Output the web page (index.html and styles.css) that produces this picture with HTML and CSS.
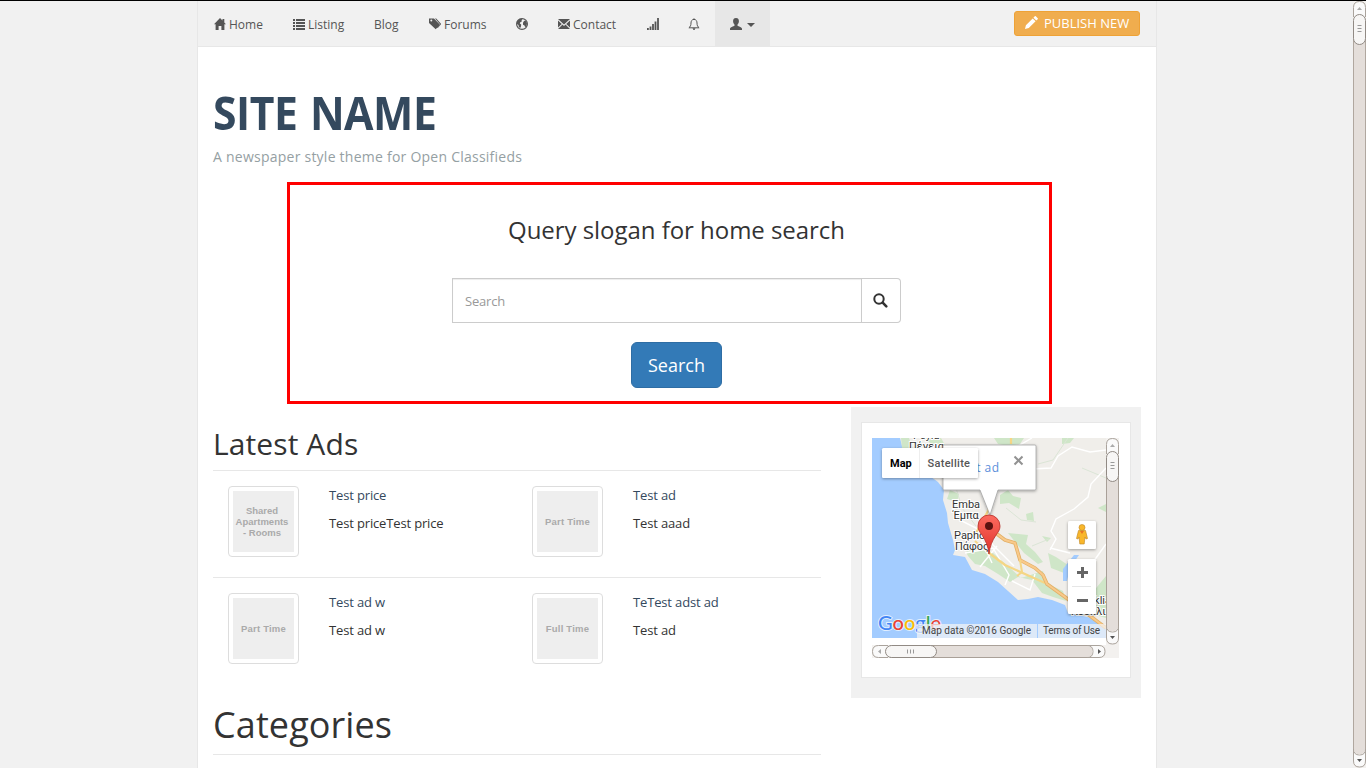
FILE: index.html
```html
<!DOCTYPE html>
<html lang="en">
<head>
<meta charset="utf-8">
<title>Site Name</title>
<link rel="stylesheet" href="styles.css">
</head>
<body>
<div class="viewport">
<div class="page">
  <nav class="nav">
    <a class="item home"><svg class="ic" viewBox="0 0 12 12"><path d="M6 0 0 6.200h1.600V12h3V8h2.800v4h3V6.200H12L10.300 4.500V1H8.500v1.600z"/></svg><span>Home</span></a>
    <a class="item listing"><svg class="ic" viewBox="0 0 12 12"><path d="M0 1h2v2H0zM3 1h9v2H3zM0 4h2v2H0zM3 4h9v2H3zM0 7h2v2H0zM3 7h9v2H3zM0 10h2v2H0zM3 10h9v2H3z"/></svg><span>Listing</span></a>
    <a class="item blog"><span>Blog</span></a>
    <a class="item forums"><svg class="ic" viewBox="0 0 12 12"><path fill-rule="evenodd" d="M0 .5h5L11 6.800 6.700 11.300 0 4.900zM2.300 1.600a1 1 0 1 0 0 2 1 1 0 0 0 0-2z"/><path d="M6 .5h1.200L12.300 6 8.800 10l-.8-.6 3.200-3z"/></svg><span>Forums</span></a>
    <a class="item globe"><svg class="ic" viewBox="0 0 12 12"><circle cx="6" cy="6" r="5.400" fill="none" stroke="#555" stroke-width="1.200"/><path d="M.8 3.500 3.500.8 6.500.8 5.500 2.200 6 3.200 4.300 4.200 3.800 5.500 5.200 6.500 5 8.500 4.200 10 2.800 9 2.500 7 1 6zM8 3l1.500-.5L11 5l-.5 3-1.300 1.200L8.500 7.500 7 6.800 7 4.800z"/></svg></a>
    <a class="item contact"><svg class="ic" viewBox="0 0 12 12"><path d="M0 1h12L6 6.500zM0 2.400 3.800 6 0 9.600zM12 2.400 8.200 6 12 9.600zM0 11l4.500-4.400L6 8l1.500-1.400L12 11z"/></svg><span>Contact</span></a>
    <a class="item signal"><svg class="ic" viewBox="0 0 12 12"><path d="M0 10h1.800v2H0zM2.600 8.500h1.800V12H2.600zM5.100 6h1.800v6H5.100zM7.600 3.500h1.800V12H7.600zM10.100 0h1.800v12h-1.800z"/></svg></a>
    <a class="item bell"><svg class="ic" viewBox="0 0 12 12"><path d="M6 .3v1M6 1.400C3.700 1.400 3 3.300 3 5c0 2.400-.7 3.700-2.100 4.800h10.200C9.700 8.700 9 7.400 9 5c0-1.700-.7-3.600-3-3.600z" fill="none" stroke="#555"/><path d="M4.500 10.200h3L6.500 12h-1z"/></svg></a>
    <a class="item user"><svg class="ic" viewBox="0 0 12 12"><path d="M6 0C3.700 0 2.900 1.600 3.100 3.600c.1 1.500.7 2.300 1.400 2.900v1.200C3.500 8.400 0 9 0 10.800V12h12v-1.200c0-1.800-3.500-2.400-4.500-3.100V6.500c.7-.6 1.300-1.400 1.400-2.900C9.100 1.600 8.300 0 6 0z"/></svg><i class="caret"></i></a>
    <a class="publish"><svg class="pencil" viewBox="0 0 13 13"><path d="M0 13 .9 9.200 7.700 2.400l2.900 2.900L3.800 12.100zM8.400 1.700 9.800.3q.5-.5 1 0l1.900 1.900q.5.500 0 1L11.300 4.600z"/></svg><span>PUBLISH NEW</span></a>
  </nav>
  <header class="brand">
    <h1>SITE NAME</h1>
    <p>A newspaper style theme for Open Classifieds</p>
  </header>
  <section class="search">
    <h2>Query slogan for home search</h2>
    <div class="group"><div class="field">Search</div><div class="addon"><svg width="15" height="15" viewBox="0 0 15 15"><circle cx="6" cy="6" r="4.700" fill="none" stroke="#333" stroke-width="2"/><path d="m9.700 9.700 3.600 3.600" stroke="#333" stroke-width="2.600" stroke-linecap="round"/></svg></div></div>
    <a class="go">Search</a>
  </section>
  <div class="columns">
    <main class="ads">
      <h2 class="latest">Latest Ads</h2>
      <div class="row">
        <article class="ad"><div class="thumb"><span class="three">Shared<br>Apartments<br>- Rooms</span></div><div class="info"><a>Test price</a><p>Test priceTest price</p></div></article>
        <article class="ad"><div class="thumb"><span>Part Time</span></div><div class="info"><a>Test ad</a><p>Test aaad</p></div></article>
      </div>
      <div class="row">
        <article class="ad"><div class="thumb"><span>Part Time</span></div><div class="info"><a>Test ad w</a><p>Test ad w</p></div></article>
        <article class="ad"><div class="thumb"><span>Full Time</span></div><div class="info"><a>TeTest adst ad</a><p>Test ad</p></div></article>
      </div>
      <h2 class="categories">Categories</h2>
    </main>
    <aside class="side"><div class="card"><div class="frame">
      <svg class="map" width="234" height="200" viewBox="0 0 234 200">
        <defs>
          <filter id="sh" x="-20%" y="-20%" width="140%" height="150%"><feDropShadow dx="0" dy="1" stdDeviation="1.500" flood-opacity=".35"/></filter>
          <linearGradient id="pin" x1="0" y1="0" x2="0" y2="1"><stop offset="0" stop-color="#fc6b60"/><stop offset="1" stop-color="#e0322b"/></linearGradient>
        </defs>
        <rect width="234" height="200" fill="#a3ccff"/>
        <path fill="#f0eeea" d="M28 0 30 8 34 16 40 22 52 34 66 44 72 52 71 62 75 75 76 85 81 102 83 112 81 117 93 119 100 132 113 136 126 144 136 153 146 162 156 161 166 159 180 162 193 167 196 175 220 180 234 189V0z"/>
        <g fill="#cfe6c8">
          <path d="M29 0h8l3 9 3 4-5 5-7-2-1-6zM51 0h18l4 7-13-1zM122 0h30l-4 6-12 2-10-2zM190 0h12l-4 5-8 1zM128 57l8-5 5 6 8 2-2 11-10-6-9 1zM154 76l7-2 1 9-7-1zM94 114l10-7 17 8 16 14 12 11 22-7 3 12 17 8 3 10-13-4-11-4-10-13-14-3-8 5-12-8-13-8-10-2-7-8zM136 95l8 10 8 10 14 11 5-2-8-10-9-8 2-9zM176 115l8 4 12 8-4 8-13-5zM211 166l23-28v42l-14-4z"/>
          <path d="M78 52l9 4-2 8-10-3zM170 98l9 2-4 4zM226 70l8-4v8z"/>
        </g>
        <path fill="#a3ccff" d="m191 131 11-14 5 0-9 13-3 13h-4z"/>
        <g fill="none" stroke="#dbe5d6"><path d="M78 30l12 40 14 18M134 70l15 12 15 2M160 108l17-7M196 0l-15 22-15 4M210 30l24 10"/></g>
        <g fill="none" stroke="#fff" stroke-width="1.400">
          <path d="M113 20 125 14 146 8 160 0M160 31l19-1 7-12 14-9 18 5 16-2M178 112l6-11-5-8 5-12 18-10 14-12 3-13 15-16M84 80l20 10 16 35M93 115l28-5 16 27-4 10M108 129l17-21M118 104l24 24M163 136l-5 16-18-9M178 110l20 5M204 148l30-42"/>
        </g>
        <g fill="none" stroke-linejoin="round">
          <path d="M139 0v6M119 60l-3 13-12 22M113 112l20 15 40 18" stroke="#f5d685" stroke-width="2.200"/>
          <path d="M121 93l12 9 10 3 5 17 15 8 8 7 4 9 18 13 41 31" stroke="#e2b067" stroke-width="3.600"/>
          <path d="M121 93l12 9 10 3 5 17 15 8 8 7 4 9 18 13 41 31" stroke="#f9c98a" stroke-width="2"/>
          <path d="M103 103l10 9M148 122l2 12-5 4" stroke="#f5d685" stroke-width="2"/>
        </g>
        <g class="place"><text x="41" y="1">Peyia</text><text x="37" y="12">Πέγεια</text><text x="80" y="70">Emba</text><text x="81" y="81">Έμπα</text><text x="82" y="101">Paphos</text><text x="83" y="112">Πάφος</text><text x="203" y="166">Kouklia</text><text x="199" y="177">Κούκλια</text></g>
        <path d="M72 7h91q1 0 1 1v43q0 1-1 1h-37l-8 25-10-25H72q-1 0-1-1V8q0-1 1-1z" fill="#fff" stroke="#999" stroke-width=".7" filter="url(#sh)"/>
        <text x="84" y="34" class="pop" textLength="43">Test ad</text>
        <path d="m142.500 18.500 8 8m0-8-8 8" stroke="#929292" stroke-width="2"/>
        <path d="M117 116c-1-8-3-13-7-19-3-4-4-6-4-9a11 11 0 0 1 22 0c0 3-1 5-4 9-4 6-6 11-7 19z" fill="url(#pin)" stroke="#b52b25" stroke-width=".8"/><circle cx="117" cy="88" r="4" fill="#5b1210"/>
        <rect x="10" y="10" width="96" height="30" rx="1.500" fill="#fff" filter="url(#sh)"/><path d="M47.500 10v30" stroke="#eee"/>
        <text x="18" y="29" class="tab on">Map</text><text x="55.500" y="29" class="tab" textLength="42.500">Satellite</text>
        <rect x="196" y="83" width="28" height="28" rx="1.500" fill="#fff" filter="url(#sh)"/>
        <g fill="#f9b72b" stroke="#be8421" stroke-width=".6"><path d="M206.500 92.500h7l2 8-1.500.5-1-2-.8 7h-4.400l-.8-7-1 2-1.500-.5z"/><circle cx="210" cy="89.500" r="3"/></g><path d="m208 93 2 3 2-3z" fill="#e77426"/>
        <rect x="196" y="121" width="28" height="55" rx="1.500" fill="#fff" filter="url(#sh)"/>
        <path d="M200 148.500h19" stroke="#e6e6e6"/><path d="M205 134.500h11M210.500 129v11M205 162.500h11" stroke="#666" stroke-width="3"/>
        <text x="6" y="192" class="logo"><tspan fill="#4285f4">G</tspan><tspan fill="#ea4335">o</tspan><tspan fill="#fbbc05">o</tspan><tspan fill="#4285f4">g</tspan><tspan fill="#34a853">l</tspan><tspan fill="#ea4335">e</tspan></text>
        <rect x="45" y="186" width="120" height="14" fill="#f5f5f5" opacity=".7"/><rect x="166" y="186" width="68" height="14" fill="#f5f5f5" opacity=".7"/>
        <text x="50" y="196" class="credit" textLength="109">Map data ©2016 Google</text><text x="171" y="196" class="credit" textLength="57">Terms of Use</text>
      </svg>
      <svg class="vbar" width="13" height="207"><rect width="13" height="207" fill="#a9a098"/><rect x="1" width="11" height="207" fill="#e4deda"/><path d="M0 0h13v20H0zM0 190h13v17H0z" fill="#f3f1ef"/><path d="M.5 16V6.500Q.5.5 6.500.5t6 6V16M.5 188q0 6 6 6t6-6v12q0 6-6 6t-6-6z" fill="#fafafa" stroke="#aaa39c"/><path d="M1 187h11q0 6.500-5.500 6.500T1 187z" fill="#e4deda"/><rect x=".5" y="13.500" width="12" height="30" rx="6" fill="#f7f6f5" stroke="#918a84"/><path d="M4.500 24.500h4m-4 3h4m-4 3h4" stroke="#999"/><path d="m4 9 2.500-3L9 9z" fill="#aaa"/><path d="m4 198 2.500 3 2.500-3z" fill="#555"/></svg>
      <svg class="hbar" width="234" height="13"><rect width="234" height="13" fill="#a9a098"/><rect y="1" width="234" height="11" fill="#e4deda"/><path d="M0 0h18v13H0zM220 0h14v13h-14z" fill="#f3f1ef"/><path d="M16 .5H6.500q-6 0-6 6t6 6H16M215 .5q6 0 6 6t-6 6h12q6 0 6-6t-6-6z" fill="#fafafa" stroke="#aaa39c"/><path d="M214 1q6.500 0 6.500 5.500T214 12z" fill="#e4deda"/><rect x="13.500" y=".5" width="51" height="12" rx="6" fill="#f7f6f5" stroke="#918a84"/><path d="M35.500 4.500v4m3-4v4m3-4v4" stroke="#999"/><path d="M9 4 6 6.500 9 9z" fill="#aaa"/><path d="m226 4 3 2.500-3 2.500z" fill="#555"/></svg>
      <i class="corner"></i>
    </div></div></aside>
  </div>
</div>
<svg class="scroll" width="13" height="767"><rect width="13" height="767" fill="#b0a79f"/><rect x="1" width="11" height="767" fill="#e4deda"/><path d="M0 0h13v20H0zM0 750h13v17H0z" fill="#f3f1ef"/><path d="M.5 16V6.500Q.5.5 6.500.5t6 6V16M.5 748q0 6 6 6t6-6v12q0 6-6 6t-6-6z" fill="#fafafa" stroke="#aaa39c"/><path d="M1 747h11q0 6.500-5.500 6.500T1 747z" fill="#e4deda"/><rect x=".5" y="13.500" width="12" height="30" rx="6" fill="#f7f6f5" stroke="#918a84"/><path d="M4.500 24.500h4m-4 3h4m-4 3h4" stroke="#999"/><path d="m4 9 2.500-3L9 9z" fill="#aaa"/><path d="m4 758 2.500 3 2.500-3z" fill="#555"/></svg>
</div>
<div class="highlight"></div>
</body>
</html>
```
FILE: styles.css
```css
* { box-sizing: border-box; }
body { margin: 0; height: 768px; overflow: hidden; background: #f1f1f1; color: #333; font: 13px/20px "Open Sans", sans-serif; }
h1, h2, p { margin: 0; font-weight: 400; }
.viewport { display: flex; height: 768px; border-top: 1px solid #000; }
.page { width: 960px; margin-left: 197px; background: #fff; border: solid #e7e7e7; border-width: 0 1px; }
.scroll { margin-left: auto; display: block; }
.nav { display: flex; height: 46px; background: #f1f1f1; border-bottom: 1px solid #e7e7e7; padding: 0 16px 0 1px; font-size: 12px; color: #555; }
.item { display: flex; align-items: center; padding: 0 0 0 15px; white-space: nowrap; gap: 3px; }
.item span { padding-top: 2px; }
.ic { width: 12px; height: 12px; fill: #555; flex: none; }
.home { width: 79px; }
.listing { width: 81px; }
.blog { width: 55px; }
.forums { width: 87px; }
.globe { width: 42px; }
.contact { width: 89px; }
.signal { width: 41px; }
.bell { width: 42px; }
.user { width: 55px; background: #e7e7e7; gap: 5px; }
.item .ic { margin-top: 1px; }
.caret { margin-top: 2px; border: 4px solid transparent; border-top-color: #555; border-bottom: 0; }
.publish { display: flex; align-items: center; gap: 6px; margin: 10px 0 0 auto; width: 126px; height: 25px; padding: 0 0 2px 10px; border: 1px solid #eea236; border-radius: 3px; background: #f0ad4e; color: #fff; font-size: 13px; white-space: nowrap; }
.pencil { width: 13px; height: 13px; fill: #fff; }
.brand { height: 135px; padding: 36px 15px 0; }
.brand h1 { width: 300px; font-size: 47px; font-weight: 700; line-height: 58px; color: #34495e; letter-spacing: -.5px; word-spacing: 2px; white-space: nowrap; transform: scaleX(.908); transform-origin: 0 0; }
.brand p { margin-top: 6px; font-size: 14px; line-height: 20px; letter-spacing: .24px; color: #95a0a3; }
.search { height: 224px; padding: 35px 2px 0 0; display: flex; flex-direction: column; align-items: center; }
.search h2 { padding-left: 1px; font-size: 24px; line-height: 26px; letter-spacing: -.04px; }
.group { display: flex; width: 449px; height: 45px; margin-top: 35px; }
.field { flex: 1; padding: 0 12px 0 12.5px; border: 1px solid #ccc; line-height: 44px; letter-spacing: -.2px; color: #999; box-shadow: inset 0 1px 1px rgba(0,0,0,.075); }
.addon { width: 39px; border: 1px solid #ccc; border-left: 0; border-radius: 0 4px 4px 0; display: flex; align-items: center; justify-content: center; }
.go { width: 91px; height: 46px; margin-top: 19px; padding-left: 1px; border: 1px solid #2e6da4; border-radius: 6px; background: #337ab7; color: #fff; font-size: 18px; line-height: 44px; text-align: center; }
.columns { display: flex; padding: 0 15px; justify-content: space-between; }
.ads { width: 608px; padding-top: 21px; }
.latest { font-size: 30px; line-height: 33px; height: 43px; letter-spacing: .1px; }
.row { display: flex; height: 107px; padding-top: 15px; border-top: 1px solid #e7e7e7; }
.ad { display: flex; gap: 30px; width: 304px; padding-left: 15px; }
.thumb { width: 71px; height: 71px; padding: 4px; border: 1px solid #ddd; border-radius: 4px; }
.thumb span { display: block; height: 61px; padding-top: 25px; background: #eee; color: #aaa; font: bold 9.5px/11px "Liberation Sans", sans-serif; letter-spacing: .2px; text-align: center; }
.thumb .three { padding: 14px 3px 0 0; letter-spacing: 0; }
.info { line-height: 18px; letter-spacing: -.15px; white-space: nowrap; }
.info a { color: #34495e; }
.info p { margin-top: 10px; }
.categories { margin-top: 21px; height: 50px; border-bottom: 1px solid #e7e7e7; font-size: 36px; line-height: 40px; letter-spacing: .1px; }
.side { width: 290px; height: 291px; margin-top: 1px; padding: 15px 10px; background: #f1f1f1; }
.card { width: 270px; height: 256px; padding: 15px 10px; background: #fff; border: 1px solid #e7e7e7; }
.frame { display: grid; grid-template-columns: 234px 13px; grid-template-rows: 200px 7px 13px; }
.frame svg { display: block; }
.map { grid-area: 1 / 1; font-family: Roboto, sans-serif; }
.vbar { grid-area: 1 / 2 / 3 / 3; }
.hbar { grid-area: 3 / 1; }
.corner { grid-area: 3 / 2; background: #f3f1ef; }
.place { font-size: 11px; fill: #333; stroke: #fff; stroke-width: 2px; paint-order: stroke; }
.pop { font-family: "Open Sans", sans-serif; font-size: 12px; fill: #5b8edb; }
.tab { font-size: 11px; font-weight: 500; fill: #565656; }
.on { fill: #000; font-weight: 700; }
.logo { font: 500 20px Lato, sans-serif; stroke: #fff; stroke-opacity: .7; stroke-width: 2px; paint-order: stroke; }
.credit { font-size: 10px; fill: #444; }
.highlight { position: absolute; left: 287px; top: 182px; width: 765px; height: 222px; border: 3px solid #f00; }
```
